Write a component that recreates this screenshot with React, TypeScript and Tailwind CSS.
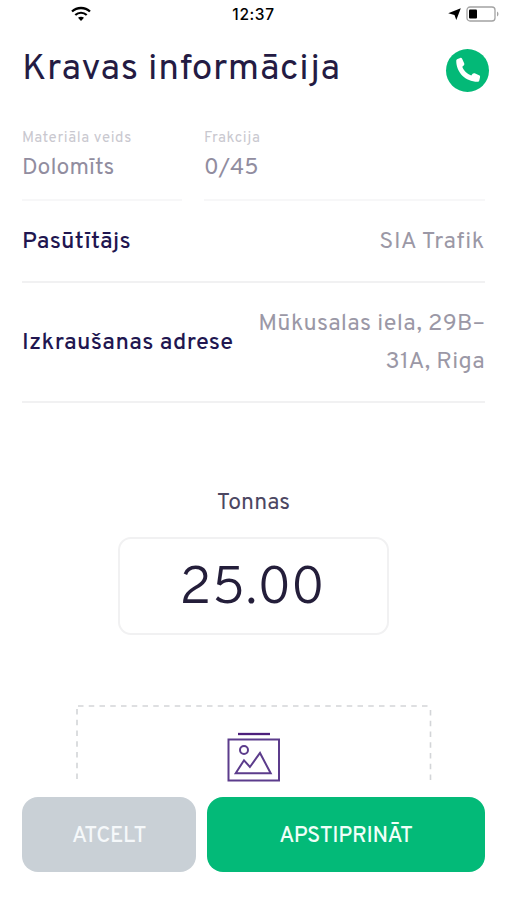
import type { ReactNode } from 'react'

function StatusBar() {
  return (
    <div className="grid h-7 shrink-0 grid-cols-3 items-center font-['Inter',sans-serif] text-black">
      <svg className="ml-[71px] h-[16px] w-[20px]" viewBox="0 0 20 16" fill="none" stroke="currentColor">
        <path d="M1 5.500C6 .8 14 .8 19 5.500" strokeWidth="2.300" />
        <path d="M4.300 9C7.500 6 12.500 6 15.700 9" strokeWidth="2.200" />
        <path d="M7 11.800C8.600 10.300 11.400 10.300 13 11.800L10 15Z" fill="currentColor" stroke="none" />
      </svg>
      <span className="pt-px pl-px text-center text-[15.500px] leading-none font-medium tracking-[0.6px]">12:37</span>
      <div className="flex items-center justify-end gap-[5px] pr-[7px]">
        <svg className="h-3 w-[13px]" viewBox="0 0 13 12" fill="currentColor">
          <path d="M12.800 .2L8.300 12L6.500 7L.2 5.300Z" />
        </svg>
        <svg className="h-4 w-[33px]" viewBox="0 0 33 16" fill="none">
          <rect x="1" y="1" width="28" height="14" rx="3" stroke="#a3a3a3" strokeWidth="1.3" />
          <rect x="3" y="3.500" width="8" height="9" rx="1" fill="#000" />
          <path d="M31 5.500c2 1 2 4 0 5Z" fill="#a3a3a3" />
        </svg>
      </div>
    </div>
  )
}

function Row({ label, className, children }: { label: string; className: string; children: ReactNode }) {
  return (
    <div className={`flex shrink-0 items-center justify-between border-b-2 border-[#f1f1f2] pt-[3px] text-[23.5px] ${className}`}>
      <span className="whitespace-nowrap font-medium tracking-[0.35px] text-[#211650]">{label}</span>
      <span className="pb-[2px] text-right leading-[38px] text-[#9b98a6]">{children}</span>
    </div>
  )
}

export default function App() {
  return (
    <div className="flex h-[900px] w-[506px] flex-col overflow-hidden bg-white font-['Overpass','Roboto',sans-serif]">
      <StatusBar />

      <main className="flex h-[754px] shrink-0 flex-col overflow-hidden pr-[21px] pl-[22px]">
        <header className="flex h-[84px] shrink-0 items-center justify-between">
          <h1 className="pb-[2px] text-[37px] leading-none tracking-[0.7px] text-[#241b43]">Kravas informācija</h1>
          <div className="-mr-1 flex size-[43px] items-center justify-center rounded-full bg-[#03b977]">
            <svg className="size-[26px]" viewBox="0 0 27 27" fill="#fff">
              <path d="M1.300 4C1.300 2.800 1.800 2.400 2.700 2L5.300 1C6.300.7 7 1 7.400 1.900L9.500 6.600C9.900 7.500 9.700 8.200 9 8.800L7.600 10.100C8.900 14 12.600 17.600 16.900 19.200L18.300 17.500C18.900 16.800 19.600 16.600 20.500 17L25 19C25.900 19.400 26.200 20.100 26 21L25.300 24.200C25 25.300 24.400 25.800 23.300 25.800C11 25.800 1.300 16.200 1.300 4Z" />
            </svg>
          </div>
        </header>

        <section className="flex h-[89px] shrink-0 gap-[22px] pt-[18px]">
          <div className="w-[160px] border-b-2 border-[#f7f7f8]">
            <p className="text-[15px] leading-[18px] tracking-[0.6px] text-[#c9c8cf]">Materiāla veids</p>
            <p className="mt-[8px] text-[23px] leading-[26px] tracking-[0.1px] text-[#918d9f]">Dolomīts</p>
          </div>
          <div className="flex-1 border-b-2 border-[#f7f7f8]">
            <p className="text-[15px] leading-[18px] tracking-[0.6px] text-[#c9c8cf]">Frakcija</p>
            <p className="mt-[8px] text-[23px] leading-[26px] text-[#918d9f]">0/45</p>
          </div>
        </section>

        <Row label="Pasūtītājs" className="h-[82px] tracking-[0.7px]">SIA Trafik</Row>
        <Row label="Izkraušanas adrese" className="h-[120px] tracking-[0.35px]">
          Mūkusalas iela, 29B–
          <br />
          31A, Riga
        </Row>

        <section className="flex shrink-0 flex-col items-center pt-[86px]">
          <p className="text-[23px] leading-[30px] text-[#4c4762]">Tonnas</p>
          <div className="mt-[18px] flex h-[98px] w-[271px] items-center justify-center rounded-[13px] border-2 border-[#f1f1f2] pt-[8px] pr-[3px] text-[54px] leading-none font-[350] text-[#241e3a]">
            25.00
          </div>
        </section>

        {/* Photo drop zone, runs on below the fold */}
        <section className="relative mt-[70px] ml-[54px] flex h-[120px] w-[356px] shrink-0 justify-center pt-[27px]">
          <svg className="absolute inset-0 h-full w-full" fill="none" stroke="#d3d5d8" strokeWidth="1.6" strokeDasharray="5.5 5.250">
            <path d="M2 1H354" />
            <path d="M1 4V120" />
            <path d="M354.500 5V120" />
          </svg>
          <svg className="h-[50px] w-[54px]" viewBox="0 0 54 50" fill="none" stroke="#5c3c8c" strokeWidth="2">
            <path d="M11 2H43" stroke="#4d1f7c" strokeWidth="2.300" />
            <rect x="1.500" y="7.500" width="50.500" height="41" />
            <circle cx="17" cy="18" r="4" />
            <path d="M8.700 41.300L17 28.300L22.900 35L33 21L43.700 41.300Z" />
          </svg>
        </section>
      </main>

      <footer className="flex h-[118px] shrink-0 gap-[11px] bg-white pt-[15px] pr-[21px] pl-[22px] text-[22px] font-medium tracking-[-0.25px]">
        <button className="h-[75px] w-[174px] rounded-2xl bg-[#c9d0d6] pt-[3px] text-[#f5f8fa]">ATCELT</button>
        <button className="h-[75px] flex-1 rounded-2xl bg-[#03ba78] pt-[3px] text-[#effff8]">APSTIPRINĀT</button>
      </footer>
    </div>
  )
}
